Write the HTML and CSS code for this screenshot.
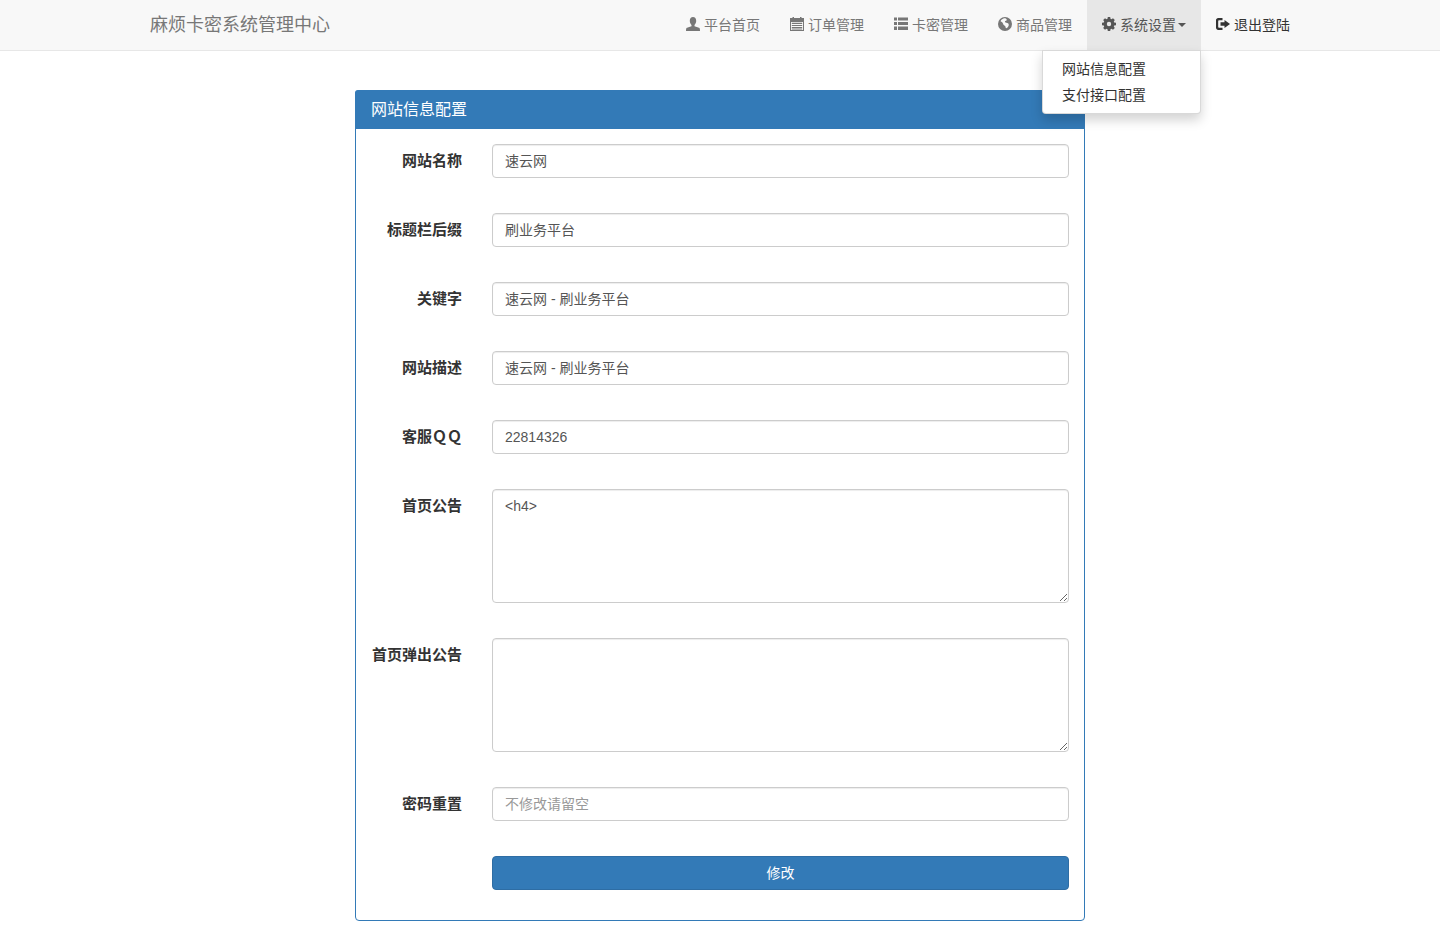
FILE: index.html
```html
<!DOCTYPE html>
<html lang="zh-cn">
<head>
    <meta charset="UTF-8">
    <meta name="viewport" content="width=device-width, initial-scale=1.0">
    <title>网站信息配置</title>
    <link rel="stylesheet" href="styles.css">
</head>
<body>
    <nav class="navbar">
        <div class="container">
            <a class="brand" href="#">麻烦卡密系统管理中心</a>
            <ul class="nav">
                <li><a href="#">
                    <svg class="icon" viewBox="0 0 14 14"><path d="M7 0C5 0 3.800 1.500 3.800 3.800c0 1.600.6 3.200 1.700 4.200v1.200L1 10.800C.2 11.100 0 12 0 14h14c0-2-.2-2.900-1-3.200L8.500 9.200V8c1.100-1 1.700-2.600 1.700-4.200C10.200 1.500 9 0 7 0z"/></svg>
                    平台首页</a></li>
                <li><a href="#">
                    <svg class="icon" viewBox="0 0 14 14"><path fill-rule="evenodd" d="M0 1h2.500V0h1.500v1h6V0h1.500v1H14v13H0zM1 5v8h12V5zM1.800 5.800h10.400v1.200H1.800zm0 2.100h10.400v1.200H1.800zm0 2.100h10.400v1.200H1.800zm0 1.800h10.400v.8H1.800z"/></svg>
                    订单管理</a></li>
                <li><a href="#">
                    <svg class="icon" viewBox="0 0 14 14"><path d="M0 .5h3v3H0zm4 0h10v3H4zM0 5h3v3H0zm4 0h10v3H4zM0 9.500h3v3.500H0zm4 0h10v3.500H4z"/></svg>
                    卡密管理</a></li>
                <li><a href="#">
                    <svg class="icon" viewBox="0 0 14 14"><path fill-rule="evenodd" d="M7 0a7 7 0 1 0 0 14A7 7 0 0 0 7 0zM5.500 1.500C6.800 1.100 8.200 1.600 8.700 2.500c.3.800-.5 1.300-1.300 1.600-.8.300-.5 1.200.2 1.500 1 .3 2.400.3 3 1.300.5 1-.3 2.800-1.400 3.800-.8.800-1.600.5-1.600-.5 0-1-1-1.400-1.800-2.100-.8-.8-.6-1.800-1.400-2.600C3.700 4.800 2.900 4.900 2.600 4.300 3 3 4.200 1.900 5.500 1.500z"/></svg>
                    商品管理</a></li>
                <li class="active"><a href="#">
                    <svg class="icon" viewBox="0 0 14 14"><path fill-rule="evenodd" d="M5.800 0h2.400l.3 1.800 1 .4L11 1.200 12.800 3l-1 1.500.4 1 1.800.3v2.400l-1.800.3-.4 1 1 1.500L11 12.800l-1.500-1-1 .4-.3 1.800H5.800l-.3-1.800-1-.4-1.500 1L1.200 11l1-1.500-.4-1L0 8.200V5.800l1.800-.3.4-1-1-1.500L3 1.200l1.500 1 1-.4zM7 4.800a2.200 2.200 0 1 0 0 4.400 2.200 2.200 0 0 0 0-4.400z"/></svg>
                    系统设置<span class="caret"></span></a>
                    <ul class="dropdown">
                        <li><a href="#">网站信息配置</a></li>
                        <li><a href="#">支付接口配置</a></li>
                    </ul>
                </li>
                <li class="logout"><a href="#">
                    <svg class="icon" viewBox="0 0 14 14"><path d="M2.200 1H6.500v2.200H3c-.5 0-.8.3-.8.8v6c0 .5.300.8.800.8h3.500V13H2.200C1 13 0 12 0 10.800V3.200C0 2 1 1 2.200 1zM8.500 3 14 7l-5.500 4V8.700H4.500V5.300h4z"/></svg>
                    退出登陆</a></li>
            </ul>
        </div>
    </nav>

    <div class="panel">
        <div class="panel-heading">网站信息配置</div>
        <form class="panel-body">
            <div class="form-group">
                <label>网站名称</label>
                <input class="form-control cjk-value" type="text" value="速云网">
            </div>
            <div class="form-group">
                <label>标题栏后缀</label>
                <input class="form-control cjk-value" type="text" value="刷业务平台">
            </div>
            <div class="form-group">
                <label>关键字</label>
                <input class="form-control cjk-value" type="text" value="速云网 - 刷业务平台">
            </div>
            <div class="form-group">
                <label>网站描述</label>
                <input class="form-control cjk-value" type="text" value="速云网 - 刷业务平台">
            </div>
            <div class="form-group">
                <label>客服ＱＱ</label>
                <input class="form-control" type="text" value="22814326">
            </div>
            <div class="form-group">
                <label>首页公告</label>
                <textarea class="form-control">&lt;h4&gt;</textarea>
            </div>
            <div class="form-group">
                <label>首页弹出公告</label>
                <textarea class="form-control"></textarea>
            </div>
            <div class="form-group">
                <label>密码重置</label>
                <input class="form-control" type="text" placeholder="不修改请留空">
            </div>
            <div class="form-group submit-row">
                <button class="btn" type="submit">修改</button>
            </div>
        </form>
    </div>
</body>
</html>
```

FILE: styles.css
```css
* {
    box-sizing: border-box;
}
body {
    margin: 0;
    background: #fff;
    color: #333;
    font-family: "Liberation Sans", "Noto Sans CJK SC", sans-serif;
    font-size: 14px;
    line-height: 20px;
}
a {
    text-decoration: none;
}
ul {
    list-style: none;
    margin: 0;
    padding: 0;
}
.navbar {
    height: 51px;
    background: #f8f8f8;
    border-bottom: 1px solid #e7e7e7;
}
.container {
    width: 1170px;
    margin: 0 auto;
    display: flex;
    justify-content: space-between;
}
.brand {
    padding: 15px;
    font-size: 18px;
    color: #777;
}
.nav {
    display: flex;
}
.nav > li {
    position: relative;
}
.nav > li > a {
    display: flex;
    align-items: center;
    height: 50px;
    padding: 0 15px;
    color: #777;
}
.nav > li.active > a {
    background: #e7e7e7;
    color: #555;
}
.nav > li.logout > a {
    color: #333;
}
.icon {
    width: 14px;
    height: 14px;
    margin-right: 4px;
    margin-top: -2px;
    fill: currentColor;
    flex: none;
}
.caret {
    width: 0;
    height: 0;
    margin-left: 2px;
    border-top: 4px solid;
    border-left: 4px solid transparent;
    border-right: 4px solid transparent;
}
.dropdown {
    position: absolute;
    top: 50px;
    right: 0;
    z-index: 1000;
    width: 159px;
    padding: 5px 0;
    background: #fff;
    border: 1px solid rgba(0,0,0,0.15);
    border-radius: 0 0 4px 4px;
    box-shadow: 0 6px 12px rgba(0,0,0,0.175);
}
.dropdown a {
    display: block;
    padding: 3px 19px;
    color: #333;
}
.panel {
    width: 730px;
    margin: 39px auto 20px;
    border: 1px solid #337ab7;
    border-radius: 4px;
}
.panel-heading {
    height: 39px;
    padding: 9px 16px;
    background: #337ab7;
    color: #fff;
    font-size: 16px;
    line-height: 22px;
    margin: -1px -1px 0;
    border-radius: 3px 3px 0 0;
}
.panel-body {
    padding: 15px;
}
.form-group {
    display: grid;
    grid-template-columns: 91px 1fr;
    column-gap: 30px;
    margin-bottom: 35px;
}
.form-group label {
    padding-top: 7px;
    font-size: 15px;
    font-weight: bold;
    text-align: right;
    white-space: nowrap;
}
.form-control {
    display: block;
    width: 100%;
    height: 34px;
    padding: 6px 12px;
    border: 1px solid #ccc;
    border-radius: 4px;
    background: #fff;
    box-shadow: inset 0 1px 1px rgba(0,0,0,0.075);
    color: #555;
    font-family: inherit;
    font-size: 14px;
    line-height: 20px;
}
.form-control::placeholder {
    color: #999;
}
.cjk-value {
    padding-top: 5px;
    padding-bottom: 7px;
}
textarea.form-control {
    height: 114px;
    resize: vertical;
}
.submit-row {
    margin-bottom: 15px;
}
.btn {
    grid-column: 2;
    height: 34px;
    padding: 0 0 2px;
    border: 1px solid #2e6da4;
    border-radius: 4px;
    background: #337ab7;
    color: #fff;
    font-family: inherit;
    font-size: 14px;
}
```
